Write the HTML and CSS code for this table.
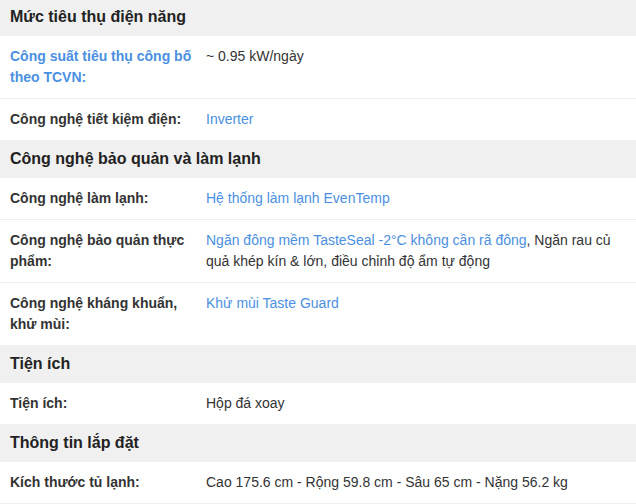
FILE: index.html
```html
<!DOCTYPE html>
<html lang="vi">
<head>
<meta charset="utf-8">
<title>Thông số kỹ thuật</title>
<link rel="stylesheet" href="styles.css">
</head>
<body>
<div class="specs">
  <section class="group">
    <h3 class="group-title">Mức tiêu thụ điện năng</h3>
    <div class="row">
      <div class="label link">Công suất tiêu thụ công bố theo TCVN:</div>
      <div class="value">~ 0.95 kW/ngày</div>
    </div>
    <div class="row">
      <div class="label">Công nghệ tiết kiệm điện:</div>
      <div class="value"><span class="link">Inverter</span></div>
    </div>
  </section>
  <section class="group">
    <h3 class="group-title">Công nghệ bảo quản và làm lạnh</h3>
    <div class="row">
      <div class="label">Công nghệ làm lạnh:</div>
      <div class="value"><span class="link">Hệ thống làm lạnh EvenTemp</span></div>
    </div>
    <div class="row">
      <div class="label">Công nghệ bảo quản thực phẩm:</div>
      <div class="value"><span class="link">Ngăn đông mềm TasteSeal -2°C không cần rã đông</span>, Ngăn rau củ quả khép kín &amp; lớn, điều chỉnh độ ẩm tự động</div>
    </div>
    <div class="row">
      <div class="label">Công nghệ kháng khuẩn, khử mùi:</div>
      <div class="value"><span class="link">Khử mùi Taste Guard</span></div>
    </div>
  </section>
  <section class="group">
    <h3 class="group-title">Tiện ích</h3>
    <div class="row">
      <div class="label">Tiện ích:</div>
      <div class="value">Hộp đá xoay</div>
    </div>
  </section>
  <section class="group">
    <h3 class="group-title">Thông tin lắp đặt</h3>
    <div class="row">
      <div class="label">Kích thước tủ lạnh:</div>
      <div class="value">Cao 175.6 cm - Rộng 59.8 cm - Sâu 65 cm - Nặng 56.2 kg</div>
    </div>
  </section>
</div>
</body>
</html>
```
FILE: styles.css
```css
html, body {
  margin: 0;
  padding: 0;
  background: #fff;
}
body {
  font-family: "Liberation Sans", Arial, sans-serif;
  color: #333;
  font-size: 14px;
}
.specs {
  margin-top: -2px;
}
.group-title {
  margin: 0;
  background: #f0f0f0;
  color: #222;
  font-size: 16px;
  font-weight: bold;
  line-height: 22px;
  padding: 8px 10px;
}
.row {
  display: grid;
  grid-template-columns: 196px 1fr;
  line-height: 21px;
  border-bottom: 1px solid #eeeeee;
}
.row:last-child {
  border-bottom: none;
}
.group:last-child .row:last-child {
  border-bottom: 1px solid #eeeeee;
}
.label {
  padding: 10px 0 10px 10px;
  font-weight: bold;
  color: #333;
}
.value {
  padding: 10px 14px 10px 10px;
  color: #333;
}
.link {
  color: #4a90e2;
}
```
